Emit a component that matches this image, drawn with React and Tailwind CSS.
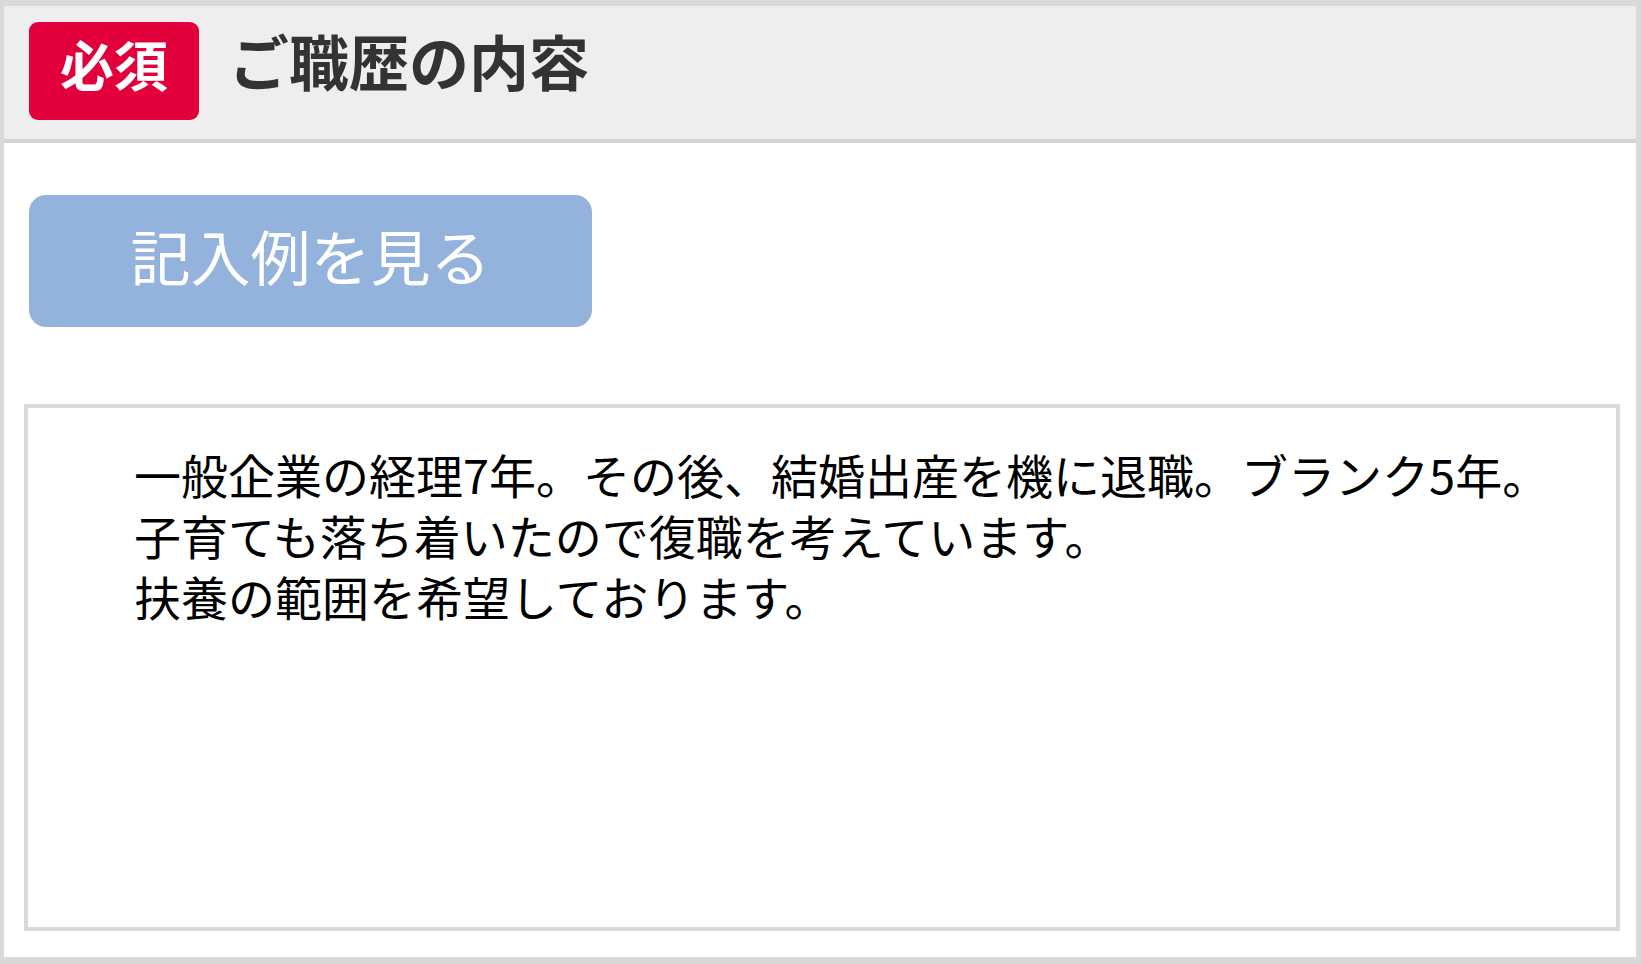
const BODY_TEXT =
  "一般企業の経理7年。その後、結婚出産を機に退職。ブランク5年。\n子育ても落ち着いたので復職を考えています。\n扶養の範囲を希望しております。";

export default function App() {
  return (
    <div className="w-[1641px] h-[964px] box-border border-l-4 border-r-[5px] border-t-[6px] border-b-[7px] border-[#d9d9d9] bg-white flex flex-col font-['Noto_Sans_CJK_JP','Noto_Sans',sans-serif] overflow-hidden">
      <div className="h-[137px] shrink-0 bg-[#eeeeee] border-b-4 border-[#d4d4d4] flex items-center pl-[25px] pb-[4px]">
        <div className="w-[170px] h-[98px] rounded-[9px] bg-[#e1003c] flex items-center justify-center pb-[14px] text-white font-bold text-[54px] leading-none">
          必須
        </div>
        <div className="ml-[30px] mb-[22px] text-[#333333] font-bold text-[60px] leading-none">
          ご職歴の内容
        </div>
      </div>
      <div className="flex-1 flex flex-col">
        <div className="mt-[52px] ml-[25px] w-[563px] h-[132px] rounded-[17px] bg-[#94b3dc] flex items-center justify-center pb-[12px] text-white text-[60px] leading-none">
          記入例を見る
        </div>
        <textarea
          readOnly
          wrap="off"
          defaultValue={BODY_TEXT}
          className="mt-[77px] ml-[20px] mr-[16px] h-[527px] box-border border-4 border-[#d9d9d9] bg-white pl-[106px] pr-4 pt-[35px] text-black text-[47px] leading-[61px] whitespace-pre resize-none overflow-hidden outline-none font-['Noto_Sans_CJK_JP','Noto_Sans',sans-serif]"
        />
      </div>
    </div>
  );
}
